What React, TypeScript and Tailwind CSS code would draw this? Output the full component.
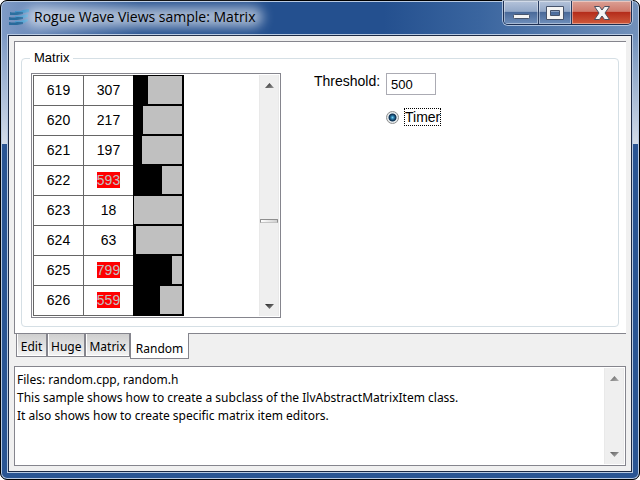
import React, { useState } from "react";

type Row = { id: number; value: number };

const rows: Row[] = [
  { id: 619, value: 307 },
  { id: 620, value: 217 },
  { id: 621, value: 197 },
  { id: 622, value: 593 },
  { id: 623, value: 18 },
  { id: 624, value: 63 },
  { id: 625, value: 799 },
  { id: 626, value: 559 },
];

const tabs = ["Edit", "Huge", "Matrix", "Random"];

const notes = [
  "Files: random.cpp, random.h",
  "This sample shows how to create a subclass of the IlvAbstractMatrixItem class.",
  "It also shows how to create specific matrix item editors.",
].join("\n");

function Logo() {
  return (
    <svg width="21" height="18" viewBox="0 0 21 18" aria-hidden="true">
      <path d="M6 3 Q11 4 14 2 L20 1 V4 L15 5 Q11 6 6 6Z" fill="#3d93c9" />
      <path d="M6 8 Q11 9 14 7 L19 6 V9 L15 10 Q11 11 6 11Z" fill="#4a9dd0" />
      <path d="M6 13 Q11 14 14 12 L19 11 V13 L15 15 Q11 16 6 16Z" fill="#4a9dd0" />
      <path d="M1 4 Q5 5 8 4 L14 4 V6 L8 7 H1Z" fill="#2b6f9f" />
      <path d="M0 9 Q5 10 8 9 L14 9 V11 L8 12 H0Z" fill="#286a9b" />
      <path d="M0 14 Q5 15 8 14 L14 14 V16 L8 17 H0Z" fill="#286a9b" />
    </svg>
  );
}

function Arrow({ down = false }: { down?: boolean }) {
  return (
    <svg width="9" height="5" viewBox="0 0 9 5" aria-hidden="true">
      <defs>
        <linearGradient id={down ? "arrowDown" : "arrowUp"} x1="0" y1="0" x2="1" y2="1">
          <stop offset="0" stopColor="#222" />
          <stop offset="1" stopColor="#999" />
        </linearGradient>
      </defs>
      <path
        d={down ? "M0 0H9L4.5 5Z" : "M0 5H9L4.5 0Z"}
        fill={down ? "url(#arrowDown)" : "url(#arrowUp)"}
      />
    </svg>
  );
}

function ScrollBar({ thumb = false, faded = false }: { thumb?: boolean; faded?: boolean }) {
  return (
    <div className="flex w-5 shrink-0 flex-col border-x border-[#e9e9e9] bg-[#efefef]">
      <button
        type="button"
        aria-label="Scroll up"
        className={`flex h-5 shrink-0 items-center justify-center ${faded ? "opacity-70" : ""}`}
      >
        <Arrow />
      </button>
      <div className="flex-[124]" />
      {thumb && (
        <div className="h-1 shrink-0 rounded-t-[1px] border border-[#8e8e8e] border-b-[#c4c4c4] bg-linear-to-r from-white to-[#cfcfcf]" />
      )}
      <div className="flex-[73]" />
      <button
        type="button"
        aria-label="Scroll down"
        className={`flex h-5 shrink-0 items-center justify-center ${faded ? "opacity-70" : ""}`}
      >
        <Arrow down />
      </button>
    </div>
  );
}

function TitleBar() {
  return (
    <header className="flex h-8 shrink-0 items-start">
      <div className="flex h-8 flex-1 items-center gap-1 pl-[2px]">
        <Logo />
        <h1 className="relative text-[14px] leading-5 text-black">
          <span className="absolute -inset-x-2 inset-y-0 rounded-full bg-white/60 blur-[6px]" />
          <span className="relative whitespace-nowrap">Rogue Wave Views sample: Matrix</span>
        </h1>
      </div>
      <div className="mr-px flex h-6 overflow-hidden rounded-b-[5px] border border-t-0 border-[#1d2f52] shadow-[0_0_0_1px_rgba(200,215,235,0.8)]">
        <button
          type="button"
          aria-label="Minimize"
          className="flex w-[35px] items-center justify-center border-r border-[#263a5f] bg-[linear-gradient(#b4c3da,#93a8c8_45%,#4a6a9a_50%,#6f8fbb)] pt-2 shadow-[inset_0_0_0_1px_rgba(255,255,255,0.4)]"
        >
          <svg width="17" height="6" viewBox="0 0 17 6" aria-hidden="true">
            <rect x="0.5" y="0.5" width="16" height="4" rx="1" fill="#f4f4f4" stroke="#46536b" />
          </svg>
        </button>
        <button
          type="button"
          aria-label="Maximize"
          className="flex w-[33px] items-center justify-center border-r border-[#263a5f] bg-[linear-gradient(#b4c3da,#93a8c8_45%,#4a6a9a_50%,#6f8fbb)] shadow-[inset_0_0_0_1px_rgba(255,255,255,0.4)]"
        >
          <svg width="18" height="14" viewBox="0 0 18 14" aria-hidden="true">
            <path
              d="M0.5 0.5H17.5V13.5H0.5ZM4.5 4.5V9.5H13.5V4.5Z"
              fill="#f4f4f4"
              fillRule="evenodd"
              stroke="#46536b"
            />
          </svg>
        </button>
        <button
          type="button"
          aria-label="Close"
          className="flex w-[59px] items-center justify-center bg-[linear-gradient(#dba095,#cf7a6c_45%,#b52d1b_50%,#cf5a3c)] shadow-[inset_0_0_0_1px_rgba(255,255,255,0.4)]"
        >
          <svg width="16" height="14" viewBox="0 0 16 14" aria-hidden="true">
            <path
              d="M0.5 0.5H5.5L8 4L10.5 0.5H15.5L11 7L15.5 13.5H10.5L8 10L5.5 13.5H0.5L5 7Z"
              fill="#f4f4f4"
              stroke="#4b4f5e"
            />
          </svg>
        </button>
      </div>
    </header>
  );
}

function MatrixTable() {
  return (
    <table className="h-[241px] border-separate border-spacing-0 text-center text-[14px] leading-4">
      <tbody>
        {rows.map((row, i) => {
          const line = i === rows.length - 1 ? "border-b" : "";
          const filled = Math.max(0, Math.floor(row.value / 20) - 1);
          return (
            <tr key={row.id} className="h-[30px]">
              <td className={`w-[50px] border-t border-l border-[#666] p-0 pb-[2px] ${line}`}>
                {row.id}
              </td>
              <td className={`w-[50px] border-t border-l border-[#666] p-0 pb-[2px] ${line}`}>
                <span className={row.value > 500 ? "inline-block bg-[#ff0000] text-[#c0c0c0]" : ""}>
                  {row.value}
                </span>
              </td>
              <td className={`w-[51px] border-t border-r-2 border-l border-black bg-black p-0 pb-px ${line}`}>
                <div className="h-7 bg-[#c0c0c0]">
                  <div className="h-7 bg-black" style={{ width: filled }} />
                </div>
              </td>
            </tr>
          );
        })}
      </tbody>
    </table>
  );
}

export default function App() {
  const [tab, setTab] = useState("Random");
  const [threshold, setThreshold] = useState("500");

  return (
    <div className="min-h-screen bg-white font-['Open_Sans',sans-serif]">
      <div className="flex min-h-screen flex-col rounded-[7px] border border-black bg-[#2a5593] bg-[linear-gradient(#d3dce800_34px,#d3dce8_143px),linear-gradient(90deg,#7f9bc6,#56799f00_22%),linear-gradient(90deg,#24508f,#24508f_60%,#3a659f_75%,#7291ba)] bg-[length:100%_143px] bg-no-repeat px-[6px] pb-[6px] shadow-[inset_0_0_0_1px_#b8cae2]">
        <TitleBar />
        <main className="mt-px flex flex-1 flex-col border border-[#b8cae2]">
          <div className="flex flex-1 flex-col border border-[#1d2a44] bg-[#f0f0f0] p-[5px]">
            <section className="border-t border-b border-l border-[#85858d] bg-white pt-2 pr-[7px] pb-[6px] pl-[6px] font-['Liberation_Sans',Arial,sans-serif]">
              <fieldset className="rounded-[4px] border border-[#d5dfe5] px-[9px] pt-[7px] pb-2">
                <legend className="ml-[-1px] px-1 text-[13px] leading-4">Matrix</legend>
                <div className="flex items-start gap-[33px]">
                  <div className="flex w-[250px] shrink-0 justify-between border border-[#85858d] p-px">
                    <MatrixTable />
                    <ScrollBar thumb />
                  </div>
                  <div className="grid grid-cols-[72px_auto] gap-y-[13px]">
                    <label htmlFor="threshold" className="text-[14px] leading-4">
                      Threshold:
                    </label>
                    <input
                      id="threshold"
                      type="text"
                      value={threshold}
                      onChange={(e) => setThreshold(e.target.value)}
                      className="h-[22px] w-[50px] border border-[#ababb3] px-1 text-[13px] leading-4 outline-none"
                    />
                    <div className="col-start-2 flex items-center gap-[5px]">
                      <input
                        id="timer"
                        type="radio"
                        defaultChecked
                        className="m-0 size-[13px] appearance-none rounded-full border border-[#8e8f8f] bg-[radial-gradient(circle_closest-side,#7fd0ee_0,#2f86b5_25%,#12395c_55%,#12395c_65%,#e4e8ea_80%)]"
                      />
                      <label
                        htmlFor="timer"
                        className="border border-dotted border-black text-[14px] leading-4"
                      >
                        Timer
                      </label>
                    </div>
                  </div>
                </div>
              </fieldset>
            </section>

            <div
              role="tablist"
              className="flex h-8 items-start pl-[2px] font-['Noto_Sans',sans-serif] text-[12px] leading-4"
            >
              {tabs.map((name) => (
                <button
                  key={name}
                  type="button"
                  role="tab"
                  aria-selected={name === tab}
                  onClick={() => setTab(name)}
                  className={
                    name === tab
                      ? "-mt-px h-[26px] border-r border-b border-l border-[#85858d] bg-white px-[5px] pt-[6px]"
                      : "h-[23px] min-w-[31px] border-r border-b border-l border-[#85858d] bg-linear-to-b from-[#cfcfcf] to-[#f4f4f4] px-[3px] pt-1 shadow-[inset_1px_-1px_0_#fff]"
                  }
                >
                  {name}
                </button>
              ))}
            </div>

            <div className="flex min-h-[100px] flex-1 border border-[#85858d] bg-white p-px">
              <textarea
                readOnly
                aria-label="Description"
                value={notes}
                className="min-w-0 flex-1 resize-none overflow-hidden pt-[3px] pl-px font-['Noto_Sans',sans-serif] text-[12px] leading-[18px] outline-none"
              />
              <ScrollBar faded />
            </div>
          </div>
        </main>
      </div>
    </div>
  );
}
